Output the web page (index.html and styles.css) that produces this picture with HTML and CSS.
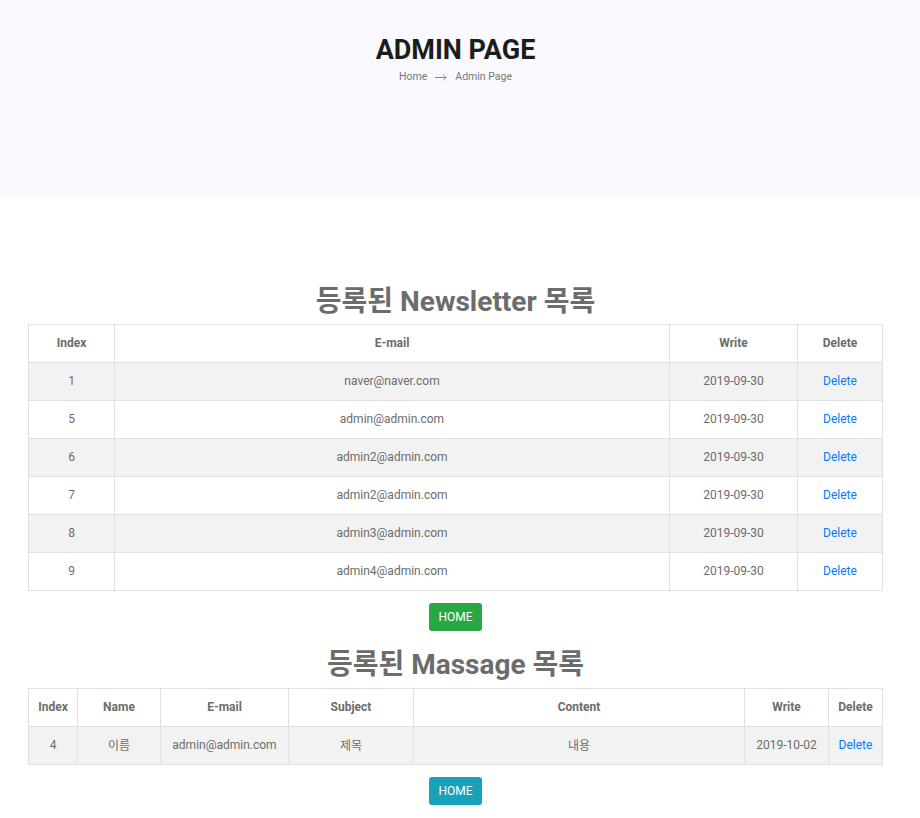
FILE: index.html
```html
<!DOCTYPE html>
<html lang="ko">
<head>
<meta charset="utf-8">
<title>Admin Page</title>
<link rel="stylesheet" href="styles.css">
</head>
<body>
<header class="banner">
  <h1 class="banner-title">ADMIN PAGE</h1>
  <nav class="crumbs">
    <span>Home</span>
    <svg class="crumb-arrow" width="12" height="8" viewBox="0 0 12 8"><path d="M0 4.5H11M8 1.5L11 4.5L8 7.5" fill="none" stroke="#777" stroke-width="0.9"/></svg>
    <span>Admin Page</span>
  </nav>
</header>

<main class="content">
  <h2 class="section-title">등록된 Newsletter 목록</h2>
  <table class="data-table">
    <colgroup>
      <col class="w86"><col class="w555"><col class="w128"><col class="w85">
    </colgroup>
    <thead>
      <tr><th>Index</th><th>E-mail</th><th>Write</th><th>Delete</th></tr>
    </thead>
    <tbody>
      <tr><td>1</td><td>naver@naver.com</td><td>2019-09-30</td><td><a href="#">Delete</a></td></tr>
      <tr><td>5</td><td>admin@admin.com</td><td>2019-09-30</td><td><a href="#">Delete</a></td></tr>
      <tr><td>6</td><td>admin2@admin.com</td><td>2019-09-30</td><td><a href="#">Delete</a></td></tr>
      <tr><td>7</td><td>admin2@admin.com</td><td>2019-09-30</td><td><a href="#">Delete</a></td></tr>
      <tr><td>8</td><td>admin3@admin.com</td><td>2019-09-30</td><td><a href="#">Delete</a></td></tr>
      <tr><td>9</td><td>admin4@admin.com</td><td>2019-09-30</td><td><a href="#">Delete</a></td></tr>
    </tbody>
  </table>
  <div class="btn-row"><a class="btn btn-green" href="#">HOME</a></div>

  <h2 class="section-title title-2">등록된 Massage 목록</h2>
  <table class="data-table">
    <colgroup>
      <col class="w49"><col class="w83"><col class="w128"><col class="w125"><col class="w331"><col class="w84"><col class="w54">
    </colgroup>
    <thead>
      <tr><th>Index</th><th>Name</th><th>E-mail</th><th>Subject</th><th>Content</th><th>Write</th><th>Delete</th></tr>
    </thead>
    <tbody>
      <tr><td>4</td><td>이름</td><td>admin@admin.com</td><td>제목</td><td>내용</td><td>2019-10-02</td><td><a href="#">Delete</a></td></tr>
    </tbody>
  </table>
  <div class="btn-row"><a class="btn btn-teal" href="#">HOME</a></div>
</main>
</body>
</html>
```
FILE: styles.css
```css
* { box-sizing: border-box; }
html, body { margin: 0; padding: 0; background: #fff; }
body {
  font-family: Roboto, "Noto Sans CJK KR", "Noto Sans", sans-serif;
  color: #6c6c6c;
}
.banner {
  background: #f9f9ff;
  height: 196px;
  padding: 34px 9px 0 0;
  text-align: center;
}
.banner-title {
  margin: 0;
  font-size: 27px;
  line-height: 32px;
  font-weight: 700;
  color: #1c1c1c;
}
.crumbs {
  margin-top: 4px;
  font-size: 10.5px;
  line-height: 14px;
  color: #777;
  display: flex;
  justify-content: center;
  align-items: center;
  gap: 8px;
}
.crumb-arrow { display: block; }
.content {
  padding: 89px 37px 0 28px;
}
.section-title {
  margin: 0 0 5px;
  text-align: center;
  font-size: 28px;
  line-height: 34px;
  font-weight: 700;
  color: #6c6c6c;
}
.title-2 { margin-top: 17px; margin-bottom: 6px; }
.data-table {
  width: 100%;
  border-collapse: collapse;
  table-layout: fixed;
  font-size: 12px;
}
.data-table th, .data-table td {
  border: 1px solid #dee2e6;
  height: 38px;
  padding: 0 4px 2px;
  text-align: center;
  vertical-align: middle;
  color: #6c6c6c;
}
.data-table th { font-weight: 700; background: #fff; }
.data-table tbody tr:nth-child(odd) td { background: #f2f2f2; }
.data-table tbody tr:nth-child(even) td { background: #fff; }
.data-table a { color: #007bff; text-decoration: none; }
.w86 { width: 86px; } .w555 { width: 555px; } .w128 { width: 128px; } .w85 { width: 85px; }
.w49 { width: 49px; } .w83 { width: 83px; } .w125 { width: 125px; } .w331 { width: 331px; } .w84 { width: 84px; } .w54 { width: 54px; }
.btn-row {
  display: flex;
  justify-content: center;
  padding-top: 12px;
}
.btn {
  display: inline-block;
  height: 28px;
  line-height: 28px;
  padding: 0 9px;
  font-size: 12px;
  color: #fff;
  text-decoration: none;
  border-radius: 3px;
}
.btn-green { background: #28a745; }
.btn-teal { background: #17a2b8; }
```
